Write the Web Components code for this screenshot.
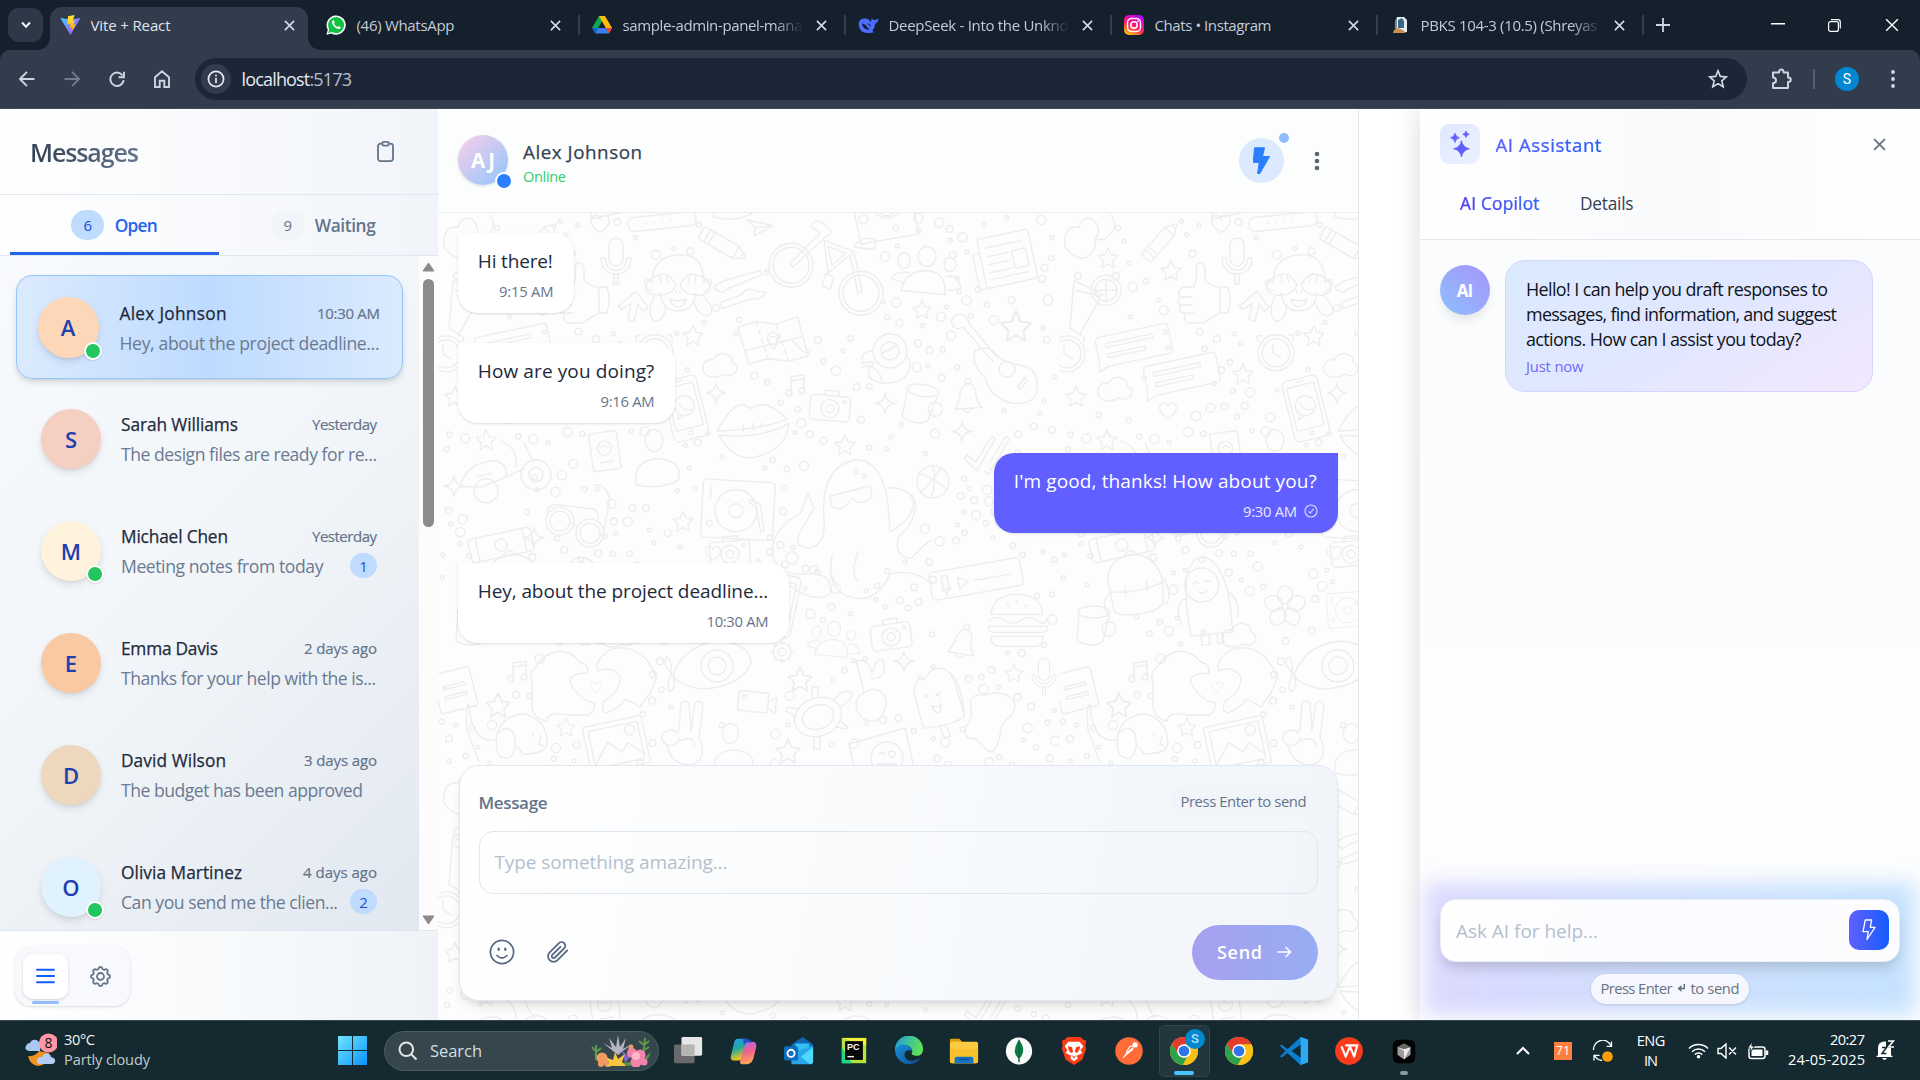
<!DOCTYPE html>
<html lang="en">
<head>
<meta charset="utf-8">
<title>Vite + React</title>
<style>
html,body{margin:0;padding:0;height:100%;overflow:hidden}
body{font-family:"Open Sans","Noto Sans",sans-serif;background:#fff;color:#1e293b}
</style>
</head>
<body>
<desktop-screen></desktop-screen>
<script>
const define = (name, html, setup) => {
  const tpl = document.createElement('template');
  tpl.innerHTML = '<style>*{box-sizing:border-box}:host{display:block;box-sizing:border-box}svg{display:block;flex:none}</style>';
  customElements.define(name, class extends HTMLElement {
    constructor() { super(); this.attachShadow({ mode: 'open' }); }
    connectedCallback() {
      if (this.ready) return;
      this.ready = true;
      const t = tpl.cloneNode(true);
      t.innerHTML += typeof html === 'function' ? html(k => this.getAttribute(k) || '', this) : html;
      this.shadowRoot.append(t.content.cloneNode(true));
      if (setup) setup(this);
    }
  });
};

/* ---------- icons ---------- */
const chrome = `<circle cx="16" cy="16" r="15" fill="#fbc116"/><path d="M16 8.9H29.2A15 15 0 0 1 16 31L22.3 19.5Z" fill="#fbc116"/><path d="M3 8.5A15 15 0 0 1 29.2 8.9H16L9.8 19.5Z" fill="#e33b2e"/><path d="M3 8.5 9.8 19.5A7 7 0 0 0 19.5 22L14.5 30.9A15 15 0 0 1 3 8.5Z" fill="#2ba24c"/><circle cx="16" cy="16" r="7.3" fill="#fff"/><circle cx="16" cy="16" r="5.7" fill="#2f74e8"/>`;
const I = {
  vite: `<svg width="21" height="20" viewBox="0 0 21 20"><defs><linearGradient id="a" x2="1" y2="1"><stop stop-color="#41d1ff"/><stop offset="1" stop-color="#bd34fe"/></linearGradient><linearGradient id="b" x2="0" y2="1"><stop stop-color="#ffea3a"/><stop offset="1" stop-color="#ffa800"/></linearGradient></defs><path d="M.3 3 10.4 20 20.6 3 10.5 4.6Z" fill="url(#a)"/><path d="M14.5 0 8 1.2 7.4 9.5 10.6 8.8 9.7 13 12 12.300 10.900 17 16 9.200 13 9.800 15 5.500 12.800 5.800Z" fill="url(#b)"/></svg>`,
  whatsapp: `<svg width="20" height="20" viewBox="0 0 20 20"><path d="M.4 19.700 1.800 14.800A9.600 9.600 0 1 1 5.400 18.400Z" fill="#fff"/><path d="M2.200 17.900 3.200 14.200A8 8 0 1 1 6 17Z" fill="#10c143"/><path d="M7.200 5.200C6 5.600 5.600 7.100 6.200 8.600 7.300 11.300 9.500 13.300 12.300 14 13.700 14.200 14.700 13.300 14.700 12L12.600 10.900 11.600 12C10 11.400 8.800 10.200 8 8.700L8.800 7.700 8 5.300Z" fill="#fff"/></svg>`,
  drive: `<svg width="20" height="18" viewBox="0 0 20 18"><path d="M7 0h6l-3.200 5.500-6 11L0 12Z" fill="#12a650"/><path d="M7 0h6l7 12h-6.200Z" fill="#fdbc0a"/><path d="M3.200 17.500 6.200 12H20l-3.300 5.500Z" fill="#3a7ef2"/><path d="M13.800 12H20l-3 5.500Z" fill="#ea4335"/><path d="M0 12H6.200L3.200 17.500Z" fill="#1d63d2"/></svg>`,
  deepseek: `<svg width="21" height="17" viewBox="0 0 21 17"><path d="M1 5C2 2 5 1 8 1.500 10 1.800 11.500 3 13 5 13.500 4 13 2.500 14 1.200 15 3 16 3.300 17.500 3 18.700 2.600 19.500 1.600 20.500 1.500 20.500 4 19 6 17 6.800 17 10 15.500 12.500 14.300 13.800L16 15.200C12 16.500 4.500 17 2 12 .8 9.700.4 7 1 5Z" fill="#4d6bfe"/><path d="M4 6.500C7 6.500 9 10 11.500 12.800 7.500 13.200 4.600 10.500 4 6.500ZM9.300 6.500C11.500 6 12.700 8.500 13 10.200Z" fill="#15202d"/></svg>`,
  instagram: `<svg width="20" height="20" viewBox="0 0 20 20"><defs><linearGradient id="i" x1=".2" y1="1" x2=".7" y2="0"><stop stop-color="#ffc800"/><stop offset=".4" stop-color="#ff2a5a"/><stop offset=".75" stop-color="#e500b8"/><stop offset="1" stop-color="#a50cf0"/></linearGradient></defs><rect width="20" height="20" rx="5" fill="url(#i)"/><g fill="none" stroke="#fff" stroke-width="1.500"><rect x="3.500" y="3.500" width="13" height="13" rx="4"/><circle cx="10" cy="10" r="3.200"/></g><circle cx="13.900" cy="6.200" r=".9" fill="#fff"/></svg>`,
  pbks: `<svg width="20" height="18" viewBox="0 0 20 18"><path d="M7 1h7l3 3v12H6Z" fill="#e9edf0"/><path d="M8 4l4-2 2 3v7H8Z" fill="#36688c"/><path d="M4 14l4-2 5 2 3 3H3Z" fill="#c98d55"/><path d="M7 1C4 5 5 9 5 13l2-1Z" fill="#7b8b92"/></svg>`
};
const close = (c, w = 12, sw = 2) => `<svg width="${w}" height="${w}" viewBox="0 0 12 12"><path d="M1 1 11 11M11 1 1 11" stroke="${c}" stroke-width="${sw}" fill="none"/></svg>`;

/* ---------- browser frame ---------- */
define('browser-tab', (a) => `<style>
:host{width:266px;height:43px;flex:none;display:flex;align-items:center}
.t{display:flex;align-items:center;width:258px;height:43px;padding:0 0 7px 10px;position:relative}
:host([active]) .t{background:#333c4d;border-radius:12px 12px 0 0}
:host([active]) .t:before,:host([active]) .t:after{content:"";position:absolute;bottom:0;width:12px;height:12px}
.t:before{left:-12px;background:radial-gradient(circle at 0 0,transparent 11.500px,#333c4d 12px)}
.t:after{right:-12px;background:radial-gradient(circle at 100% 0,transparent 11.500px,#333c4d 12px)}
:host(:not([active])) .t:before,:host(:not([active])) .t:after{display:none}
.i{width:20px;display:flex;justify-content:center}
.n{width:180px;margin-left:10.500px;overflow:hidden;font-size:15px;line-height:24px;color:#c3cad8}
:host([active]) .n{color:#dfe5ef}
:host([fade]) .n{-webkit-mask:linear-gradient(90deg,#000 84%,transparent);mask:linear-gradient(90deg,#000 84%,transparent)}
.x{width:18px;margin-left:9.500px;display:flex;justify-content:center}
.d{width:2px;height:20px;background:#343e4e;margin:0 0 7px 4px}
:host([active]) .d{display:none}</style>
<div class="t"><div class="i">${I[a('icon')]}</div><div class="n"><fit-text w="${a('w')}">${a('label')}</fit-text></div><div class="x">${close('#d3d9e4', 11, 1.800)}</div></div><div class="d"></div>`);

define('browser-chrome', `<style>
:host{height:109px;background:#15202d;border-bottom:1px solid #454a59}
.s{height:50px;display:flex;align-items:flex-end;padding-left:8px}
.m{width:35px;height:34px;border-radius:11px;background:#2e3848;display:grid;place-items:center;margin:0 7px 8px 0}
.p{width:20px;height:43px;display:flex;align-items:center;justify-content:center;margin-left:7px;padding-bottom:7px}
.w{display:flex;margin-left:auto;height:50px;align-items:center;width:171px}
.w div{width:57px;display:grid;place-items:center}
.b{height:58px;background:#333c4d;border-radius:10px 10px 0 0;display:flex;align-items:center;padding-left:4.500px}
.c{width:45px;display:grid;place-items:center}
.o{width:1552px;height:42px;border-radius:21px;background:#1c2636;margin-left:10.500px;display:flex;align-items:center;padding:0 19px 0 6px;font-size:18px;color:#e4e9f2}
.q{width:30px;height:30px;border-radius:50%;background:#333c4d;display:grid;place-items:center;margin-right:10.500px}
.st{margin-left:auto}
.e{width:66px;display:grid;place-items:center;padding-left:3px}.v{width:1.500px;height:20px;background:#566072}
.a{width:24px;height:24px;border-radius:50%;background:#0288d1;color:#fff;display:grid;place-items:center;font:14px/24px Roboto;margin-left:20.500px}
.k{margin-left:31.500px}.port{color:#b6bece}</style>
<div class="s"><div class="m"><svg width="10" height="8" viewBox="0 0 10 8"><path d="M1 1.500 5 5.800 9 1.500" fill="none" stroke="#eef2f8" stroke-width="2"/></svg></div>
<browser-tab active icon="vite" label="Vite + React" w="80"></browser-tab>
<browser-tab icon="whatsapp" label="(46) WhatsApp" w="98"></browser-tab>
<browser-tab fade icon="drive" label="sample-admin-panel-mana" w="180"></browser-tab>
<browser-tab fade icon="deepseek" label="DeepSeek - Into the Unkno" w="180"></browser-tab>
<browser-tab icon="instagram" label="Chats • Instagram" w="117"></browser-tab>
<browser-tab fade icon="pbks" label="PBKS 104-3 (10.5) (Shreyas" w="177"></browser-tab>
<div class="p"><svg width="14" height="14" viewBox="0 0 14 14"><path d="M7 0V14M0 7H14" stroke="#cfd6e2" stroke-width="1.800"/></svg></div>
<div class="w"><div><svg width="14" height="4"><rect width="14" height="1.500" fill="#fff"/></svg></div><div><svg width="13" height="13" viewBox="0 0 13 13" fill="none" stroke="#fff" stroke-width="1.200"><rect x=".6" y="2.600" width="9.800" height="9.800" rx="2"/><path d="M3 .7H9.800Q12.300.7 12.300 3.200V9.500"/></svg></div><div>${close('#fff', 14, 1.200)}</div></div></div>
<div class="b"><div class="c"><svg width="16" height="16" viewBox="0 0 16 16" fill="none" stroke="#cdd5e3" stroke-width="1.900"><path d="M8 .8.9 8 8 15.200M1 8H15.500"/></svg></div>
<div class="c"><svg width="16" height="16" viewBox="0 0 16 16" fill="none" stroke="#717b8d" stroke-width="1.900"><path d="M8 .8 15.100 8 8 15.200M15 8H.5"/></svg></div>
<div class="c"><svg width="16" height="16" viewBox="0 0 16 16" fill="none" stroke="#cdd5e3" stroke-width="1.900"><path d="M13.600 4.500A6.700 6.700 0 1 0 14.700 9.200M15 .8V6.200H9.600"/></svg></div>
<div class="c"><svg width="16" height="18" viewBox="0 0 16 18" fill="none" stroke="#cdd5e3" stroke-width="1.900"><path d="M1 7.200 8 1.300 15 7.200V17H10.300V10.800H5.700V17H1Z"/></svg></div>
<div class="o"><div class="q"><svg width="18" height="18" viewBox="0 0 18 18"><circle cx="9" cy="9" r="7.600" fill="none" stroke="#e4e9f2" stroke-width="1.700"/><path d="M9 8V13M9 4.800V6.600" stroke="#e4e9f2" stroke-width="1.700"/></svg></div>
<fit-text w="110.500">localhost<span class="port">:5173</span></fit-text>
<svg class="st" width="20" height="20" viewBox="0 0 20 20"><path d="M10 1.800 12.300 7.400 18.400 7.900 13.800 11.800 15.200 17.800 10 14.600 4.800 17.800 6.200 11.800 1.600 7.900 7.700 7.400Z" fill="none" stroke="#d5dbe7" stroke-width="1.600"/></svg></div>
<div class="e"><svg width="22" height="22" viewBox="0 0 22 22" fill="none" stroke="#cdd5e3" stroke-width="2"><path d="M2 4.500H8C8 .6 12.600.6 12.600 4.500H17V9.500C20.700 9.500 20.700 14 17 14V20H2V15.200C6 15.200 6 9.500 2 9.500Z" stroke-linejoin="round"/></svg></div><div class="v"></div><div class="a">S</div>
<svg class="k" width="4" height="18"><g fill="#d5dbe7"><circle cx="2" cy="2" r="1.900"/><circle cx="2" cy="9" r="1.900"/><circle cx="2" cy="16" r="1.900"/></g></svg></div>`);

/* ---------- sidebar ---------- */
define('chat-row', a => `<style>
:host{height:102px;display:flex;align-items:center;padding:0 22px 0 21px;flex:none}
:host([selected]){height:104px;margin:-1px -4px;padding:0 22px 0 20.500px;border:1px solid #93c5fd;border-radius:16px;background:linear-gradient(90deg,#dbeafe,#bedbff 50%,#dbeafe);box-shadow:0 4px 7px -1px #00000022,0 2px 4px -2px #0000001a}
.av{width:60px;height:60px;border-radius:50%;background:${a('color')};color:#1e40af;font-weight:600;font-size:22px;display:grid;place-items:center;position:relative;box-shadow:0 4px 8px -1px #0000001f,0 2px 4px -2px #0000001a;flex:none}
:host([selected]) .av{width:61px;height:61px}
.dot{position:absolute;right:-3px;bottom:-2px;width:18px;height:18px;border-radius:50%;background:#22c55e;border:2px solid #fff;box-shadow:0 1px 2px #0002}
.b{flex:1;margin-left:20px;min-width:0}:host([selected]) .b{margin:2px 0 0 21px}
.l{display:flex;justify-content:space-between;align-items:center;height:30px}
.n{font-size:17.300px;font-weight:500;color:#1e293b;-webkit-text-stroke:.25px #1e293b}.t{font-size:15px;color:#64748b;-webkit-text-stroke:.2px #64748b}.m{font-size:17.600px;color:#6b7a90}
.u{height:25px;min-width:27px;border-radius:13px;background:#bfdbfe;color:#1d4ed8;font-size:15px;font-weight:500;display:grid;place-items:center;margin-top:-1px}</style>
<div class="av">${a('name')[0]}${a('online') ? '<i class="dot"></i>' : ''}</div><div class="b"><div class="l"><fit-text class="n" w="${a('nw')}">${a('name')}</fit-text><fit-text class="t" w="${a('tw')}">${a('time')}</fit-text></div>
<div class="l"><fit-text class="m" w="${a('mw')}">${a('msg')}</fit-text>${a('unread') ? `<span class="u">${a('unread')}</span>` : ''}</div></div>`);

define('message-sidebar', `<style>
:host{width:438px;height:911px;display:flex;flex-direction:column;flex:none}
.h{height:86px;border-bottom:1px solid #dfe7f0;display:flex;align-items:center;justify-content:space-between;padding:0 44px 0 30px;background:linear-gradient(90deg,#fff,#f1f4f9)}
h1{margin:0;font-size:25px;line-height:36px;font-weight:600;background:linear-gradient(90deg,#334155,#64748b);-webkit-background-clip:text;background-clip:text;color:transparent}
.tabs{height:61px;border-bottom:1px solid #dfe7f0;display:flex;padding:0 10px;background:linear-gradient(90deg,#fff,#f1f4f9)}
.tab{width:209px;height:60px;display:flex;align-items:center;justify-content:center;font-size:17.300px;font-weight:600;color:#64748b;padding-top:2px;border-bottom:3px solid transparent;gap:10.500px}
.tab fit-text{padding-top:1px}
.tab.on{color:#2563eb;border-color:#2563eb}
.c{width:33px;height:30px;border-radius:15px;background:#f1f4f9;display:grid;place-items:center;font-size:15px;font-weight:500}.on .c{background:#bfdbfe;color:#1d4ed8}
.mid{height:674px;display:flex;background:#fcfcfc}
.list{width:419px;height:674px;overflow:hidden;background:linear-gradient(135deg,#f8fafc,#f1f5f9 50%,#e2e8f0);padding:20px;display:flex;flex-direction:column;gap:10px}
.sb{width:19px;display:flex;flex-direction:column;align-items:center;padding-top:6px}
.th{width:11px;height:248px;border-radius:6px;background:#8b8b8b;margin:7px 0 388px}
.f{height:90px;flex:none;border-top:1px solid #dfe6ef;background:linear-gradient(90deg,#fff,#f8fafc 50%,#eff3f7);padding:15px}
.fb{width:115px;height:60px;border-radius:16px;background:#f7f9fc;box-shadow:0 1px 3px #00000024;display:flex;align-items:center;padding:0 8px}
.fa{width:45px;height:45px;flex:none;border-radius:10px;background:#fff;box-shadow:0 1px 3px #0000002a;display:grid;place-items:center;position:relative}
.fa:after{content:"";position:absolute;left:9px;bottom:-5px;width:27px;height:3px;border-radius:2px;background:#92bcff}
.fg{width:65px;flex:none;display:grid;place-items:center}</style>
<div class="h"><h1><fit-text w="109">Messages</fit-text></h1><svg width="17" height="21" viewBox="0 0 17 21" fill="none" stroke="#64748b" stroke-width="1.800"><rect x="1" y="2.600" width="15" height="17.500" rx="2.500"/><rect x="5.300" y=".9" width="6.400" height="3.800" rx="1.600" fill="#f3f6fa"/></svg></div>
<div class="tabs"><div class="tab on"><span class="c">6</span><fit-text w="43">Open</fit-text></div><div class="tab"><span class="c">9</span><fit-text w="61">Waiting</fit-text></div></div>
<div class="mid"><div class="list">
<chat-row selected online="1" color="#fed7b8" name="Alex Johnson" nw="107" time="10:30 AM" tw="63" msg="Hey, about the project deadline..." mw="260"></chat-row>
<chat-row color="#f5cfc2" name="Sarah Williams" nw="117" time="Yesterday" tw="65" msg="The design files are ready for re..." mw="256"></chat-row>
<chat-row online="1" color="#fff3dd" name="Michael Chen" nw="107" time="Yesterday" tw="65" msg="Meeting notes from today" mw="202.500" unread="1"></chat-row>
<chat-row color="#f9c9a3" name="Emma Davis" nw="97" time="2 days ago" tw="73" msg="Thanks for your help with the is..." mw="255"></chat-row>
<chat-row color="#edd7bd" name="David Wilson" nw="105" time="3 days ago" tw="73" msg="The budget has been approved" mw="242"></chat-row>
<chat-row online="1" color="#e0f2fe" name="Olivia Martinez" nw="121" time="4 days ago" tw="74" msg="Can you send me the clien..." mw="217" unread="2"></chat-row>
</div><div class="sb"><svg width="13" height="10"><path d="M6.500 1 12 9H1Z" fill="#8b8b8b" stroke="#8b8b8b" stroke-linejoin="round"/></svg><div class="th"></div><svg width="13" height="10"><path d="M6.500 9 12 1H1Z" fill="#8b8b8b" stroke="#8b8b8b" stroke-linejoin="round"/></svg></div></div>
<div class="f"><div class="fb"><div class="fa"><svg width="19" height="16" viewBox="0 0 19 16"><path d="M1 1.700H18M1 8H18M1 14.200H18" stroke="#155dfc" stroke-width="1.900" stroke-linecap="round"/></svg></div><div class="fg"><svg width="21" height="21" viewBox="-10.500 -10.500 21 21" fill="none" stroke="#64748b" stroke-width="1.800"><path id="g"/><circle r="3.500"/></svg></div></div></div>`, el => {
  let d = '';
  for (let i = 0; i < 96; i++) { const t = i / 96 * Math.PI * 2, k = Math.cos(8 * t), r = 8.500 + .95 * Math.tanh(2.200 * k); d += (i ? 'L' : 'M') + (r * Math.sin(t)).toFixed(2) + ' ' + (r * -Math.cos(t)).toFixed(2); }
  el.shadowRoot.getElementById('g').setAttribute('d', d + 'Z');
});

/* ---------- doodle wallpaper ---------- */
const at = (x, y, d, r = 0, s = 1) => `<g transform="translate(${x} ${y.toFixed(1)}) rotate(${r}) scale(${s})">${d}</g>`;
const P = d => `<path d="${d}"/>`, C = (x, y, r) => `<circle cx="${x}" cy="${y}" r="${r}"/>`, R = (x, y, w, h, r = 2) => `<rect x="${x}" y="${y}" width="${w}" height="${h}" rx="${r}"/>`;
const D = {
  star: P('M0-10 3-3 10-2 5 3 6 10 0 6-6 10-5 3-10-2-3-3Z'),
  spark: P('M0-10Q1-1 10 0 1 1 0 10-1 1-10 0-1-1 0-10Z'),
  heart: P('M0 9C-15-1-9-11-2-8Q0-7 0-4 0-7 2-8C9-11 15-1 0 9Z'),
  mic: R(-7, -26, 14, 28, 7) + P('M-15-6Q-14 10 0 10T15-6L11-6Q10 6 0 6T-11-6ZM-2 10V20H2V10'),
  pencil: R(-24, -7, 40, 14, 3) + P('M16-7 28 0 16 7M-17-7V7M-12-7V7M23-3V3'),
  plane: P('M-13-8 13-2-6 8-5 0ZM-5 0 13-2'),
  bike: C(-35, -8, 22) + C(-35, -8, 18) + C(35, 20, 22) + C(35, 20, 18) + P('M-36-10-6-40-14-46Q-14-54-6-52L4-44Q6-38 0-37L-33-6ZM-2-33 2 0 28-22ZM2-27 6-8 20-20ZM28-22 36 18 32 20 24-18M28-28Q40-38 48-34 52-24 44-24L30-26ZM0 0-4 12 4 16 8 4Z'),
  monkey: P('M-26-6Q-26-32 0-34T26-6Q36-14 32-2 28 2 26 4M-26-6Q-36-14-32-2-30 2-26 2M-18 4Q-16 22 0 22T18 4M-8 10Q0 14 8 10 6 18 0 18T-8 10M-2 2V4M2 2V4M-2-4Q-10-18-18-14-34-10-32 2-26 8-16 6-6 6-2-4ZM2-4Q10-18 18-14 34-10 32 2 26 8 16 6 6 6 2-4ZM-24 8Q-32 24-24 32-14 34-12 16M24 6Q38 20 32 26 22 30 16 14M-12-14-10-6M-18-14-17-6M12-14 10-6M18-14 17-6'),
  thumb: P('M-2-32Q4-34 5-26V-14Q16-8 20-6V18Q12 22 4 28H-12Q-18 24-14 18-22 18-20 10-24 6-20 2-24-6-16-8H-6Q-2-18-4-28ZM20-8H28Q32 4 28 18H20M-20 2H-8M-20 10H-8M-14 18H-6'),
  arrow: P('M4-16 16 0 11 4 6-3 2 14-4 12-1-4-10 2-14-1Z'),
  map: P('M-34-16-16-20 4-16 26-22 34 18 14 22-6 18-26 22ZM-28 8 10 2 30-2M18 0 30 14') + `<path stroke-dasharray="5 4" d="M-16-20-6 18M4-16 14 22"/>` + C(0, 0, 4) + P('M-6-2Q-4-8 0-8 4-8 6-2 4 4 0 9-4 4-6-2Z'),
  cloud: P('M-12 12Q-20 8-16-1-12-6-7-4-2-13 6-10 13-8 12-2 20 2 15 9 10 13 4 10-3 15-12 12Z'),
  duck: C(4, -8, 17) + C(4, -8, 9) + P('M-4-6 12-14M-13-8Q-26-8-24 4-12 2-12 4-26 18-6 24 22 26 24 6 24 0 20-4M-24 8Q-8 4-4 22'),
  phone: R(-18, -31, 36, 62, 5) + R(-14, -24, 28, 44, 1) + C(0, -3, 10) + C(0, 25, 2) + P('M-4-28H4M-5-7Q-2 3 6 2M-8 5-10 9-4 7'),
  lips: P('M-36 4Q-20-26-8-22-2-16 4-22 16-26 34-8 10 2-36 4ZM-34 8Q-20 34 2 30 34 22 36-4 10 12-34 8ZM-10-2V4M0-4V2M8-4V0'),
  camera: R(-20, -12, 40, 25, 4) + C(0, 1, 9) + C(0, 1, 4) + P('M-6-12V-17H8V-12') + C(14, -7, 1.500),
  note: P('M-5 8V-8L8-10V5M-5-4 8-6') + C(-7, 8, 3) + C(6, 6, 3),
  clock: C(0, 0, 18) + C(0, 0, 14) + P('M-3-9V0L5 5M-18-12Q-22-18-14-17M12-18Q18-20 17-12'),
  scooter: P('M-30 10Q-24-14 4-16 18-14 16 0L-8 10-30 10ZM16 0 34-8M34-34Q40-20 44-14M10-36Q28-30 26-10') + C(-4, 14, 12) + C(46, -2, 15) + C(46, -2, 7) + P('M-12 0 2-4'),
  passport: R(-15, -20, 28, 38, 3) + C(-1, -4, 7) + P('M-7 10H6M-4-5Q-1-8 3-4'),
  person: `<ellipse cx="-4" cy="-26" rx="9" ry="11"/>` + P('M-22 18Q-26-6 0-8 26-6 20 14 0 24-22 18Z'),
  turn: R(-36, -28, 72, 58, 4) + C(-2, 2, 21) + C(-2, 2, 7) + C(-28, 16, 3) + P('M10-8 18-2 24 22 27 20 22-5 12-10ZM-28-22V-10'),
  glasses: C(-20, 2, 14) + C(10, 14, 14) + C(-20, 2, 10) + C(10, 14, 10) + P('M-8 4-2 8M-34-6Q-32-16-20-14L14-10Q20-4 18 0M24 10 30-20Q26-36 14-34'),
  octo: P('M-30 6Q-34-46 0-54 28-56 34-10L36 18Q66 0 58-20M34-26Q54-28 62-10 60 10 44 24 40 44 58 44 70 30 78 26M-30 6Q-28 30-44 34-62 34-54 18L-40-6-46-20-54 0Q-88 18-80 46-70 62-48 60M-48 60Q-20 58-24 80-40 90-64 72M-24 56Q-20 88 14 84 30 76 36 60M-22 42Q-26 64-16 70M4 38Q-4 60 4 66M36 60Q60 54 78 70') + P('M-24-18 16-28 18-18Q8-6-2-16-12 0-22-8Z') + C(-62, 44, 6) + C(-40, 56, 4) + C(2, -42, 2) + C(10, -38, 2),
  lantern: R(-32, -12, 64, 24, 4) + P('M-24-12V12M24-12V12') + C(0, 0, 6),
  people: `<ellipse cx="0" cy="-24" rx="9" ry="10"/><ellipse cx="-23" cy="-20" rx="6" ry="8"/><ellipse cx="23" cy="-16" rx="6" ry="7"/>` + P('M-26 10Q-22-10 0-10 20-8 18 14ZM-24 2-36-2Q-32-10-18-8M19-4Q32-6 34 8L20 10'),
  news: R(-26, -24, 52, 50, 3) + P('M-20-14H18M-20-5H2M-20 3H2M-20 11H2M-20 18H18M-26-10H-33V26H-22') + R(6, -6, 14, 18, 1),
  guitar: P('M-6-8-34-42M-10-4-40-38M-34-42Q-38-54-48-50-56-42-46-36L-40-38M-6-10Q-16-22-28-14-32 0-18 12-12 34 10 38 34 40 34 22 36 4 18 0 0-2-6-10Z') + C(4, 4, 8) + P('M14 22 22 12 24 16 17 24Z'),
  mug: P('M-16-12-18 16Q0 24 8 16L14-8') + `<ellipse cx="-1" cy="-13" rx="16" ry="6"/>` + C(14, 4, 7),
  bell: P('M-13 12Q-8 4-8-4-6-13 0-14 8-13 8-2 9 6 14 10ZM-4 13Q0 18 4 12') + C(0, -16, 3),
  ball: C(0, 0, 16) + P('M-14-8Q2-4 14 8M-12 10Q0 0 8-14M0-16Q4 0-2 16'),
  checks: P('M-18 6-4 16 10-18 6-20-6 8-16 2ZM4 16 8 18 24-20 20-22 8 6'),
  voice: R(-46, -14, 92, 28, 4) + P('M-18-5V7L-8 1ZM-2 1H34M-36 4Q-31 12-26 4M-31 8V12') + R(-34, -9, 6, 14, 3),
  burger: P('M-26-6Q-24-26 0-26T26-6ZM-28 0Q-20-6-12 0T4 0 20 0 30-2M-28 6H30Q32 12 26 12H-24Q-30 10-28 6ZM-26 16H26Q26 26 18 26H-16Q-26 26-26 16Z') + P('M-10-16-8-14M0-20V-17M8-14 10-16'),
  drink: P('M-18-24 10-10-12 30-22 24ZM-16-14 8-8') + C(14, -14, 15) + C(14, -14, 11) + P('M14-24V-4M4-14H24'),
  chat: P('M-36-16H36Q40-16 40-12V12Q40 16 36 16H-30L-40 20-38 8V-12ZM-28-8H22V-4H-28ZM-28 3H12V7H-28Z'),
  blob: P('M-22 8Q-24-14-8-12-4-24 6-20 16-10 8 0 18 2 22-4 32-14 24-24M-22 8Q-12 22 0 18 10 12 8 0'),
  pack: P('M-24 22-26-6Q-26-30 0-32 26-30 28 0L26 20Q20 28 0 28T-24 22ZM-26 2Q0 8 28 0M-30 26Q-38 10-24 2M28 22Q36 16 30-4M-10-2V8M12-4V6M-6-32Q0-40 6-32'),
  hood: P('M-18 38Q-24-36 0-40 22-36 24 10V38ZM-20 0Q-32 4-26 26M22-4Q36 8 30 24') + C(-2, -12, 17) + P('M-10-14Q-8-18-5-14M2-14Q4-18 7-14M-6-6Q-2-1 3-6M-8 38V48H0V38M8 38V48H14V38'),
  flower: [0, 72, 144, 216, 288].map(r => `<ellipse cx="0" cy="-12" rx="7.500" ry="9" transform="rotate(${r})"/>`).join('') + C(0, 0, 3),
  hands: P('M-62-4Q-66-14-58-20-50-34-34-36-20-34-16-26-4-22-6-14-26-14-24-4-16 12 0 16 2 24-6 28H-28Q-46 24-48 34-60 32-62 20ZM62-8Q60-20 48-32 30-44 14-36 0-26 4-16 18-22 26-10 26 6 10 14 6 24 12 26 24 22 32 12L46 20 56 6Z') + `<g transform="translate(2 0) scale(.6)">${P('M0 9C-15-1-9-11-2-8Q0-7 0-4 0-7 2-8C9-11 15-1 0 9Z')}</g>`,
  eye: P('M-42 8Q-30-24 6-26 36-22 36-4 28 18-10 22-36 20-42 8ZM-42 8Q-54-4-48-10-42-6-44 8-50 24-44 24-38 18-42 8') + C(2, -1, 16) + C(2, -1, 9),
  gear: C(0, 0, 9) + C(0, 0, 4) + P('M0-11V-8M0 8V11M-11 0H-8M8 0H11M-8-8-6-6M6 6 8 8M8-8 6-6M-8 8-6 6'),
  plant: P('M-4 0Q-8-20-12-32 0-36 4-20 8-34 14-34 22-16 4-14M-4 0Q10-10 18 6 18 24 6 28-10 28-12 12-12 2-4 0Z'),
  pop: P('M-20-12Q-16-30-8-24-2-36 10-34 22-30 24-6L28 16Q18 24-14 24ZM2 24 6 36Q10 36 12 34L8 23M18-28Q28-20 28 16M-10-10-6-8-10-6M6-10 2-8 6-6M-4 2Q2 6 6 2L4 10H0Z'),
  cam: R(-18, -11, 30, 20, 3) + P('M12-2 20-7V9L12 4') + C(-12, -5, 2),
  turtle: `<ellipse rx="24" ry="19" transform="rotate(-20)"/><ellipse rx="16" ry="12" transform="rotate(-20)"/>` + P('M16-16Q24-30 34-24 34-16 22-10M-6-20V-30H0V-20M-22 0-32-6-30-10-20-8M-4 20V32H2V19M22 4 30 10 28 12 18 10'),
  dog: P('M-26-6Q-20-26 2-26 24-20 24 4 22 14 0 14L-6 6M-26-6Q-30 20-14 18-4 10-10-8-16-16-26-6ZM-26 0Q-52 4-54-36-58-34-56-10-48 12-44 22M10-6V-4M18-4 16 4 20 6'),
  pic: R(-30, -22, 60, 48, 2) + R(-25, -17, 50, 38, 1) + P('M-25 18-8-2 4 10 12 2 25 16') + C(16, -10, 5),
  peace: P('M-2-34Q2-38 6-34L8-6 12-34Q18-38 20-32L16 0Q26 22 8 28-12 28-16 8-24 4-20-4-10-10-6-4L-4-8ZM-16 8Q-6 10-4 0M-4 4Q10-2 12 8'),
  sheet: P('M-36-10 20-26 34 36-24 46Z') + C(2, 4, 16) + P('M-6 0Q-3-3 0 0M-8 10H12Q8 18 2 18T-8 10') + C(7, 0, 3),
  goo: P('M-22-20Q-20-30-8-28 4-32 14-28 28-22 20-8 8 0 8 12 4 32-4 28L-16 16Q-30 16-26 4-18-6-22-20Z'),
  memo: R(-20, -20, 38, 40, 3) + P('M-12-6H10V-3H-12ZM-12 4H10V7H-12Z'),
  wrench: P('M-24 4-14-2 22-12 24-8-10 6-16 10-24 6ZM-18 20 4 12Q8 4 16 8L28 10Q22 18 14 16L-16 26Z'),
  can: R(-34, -7, 68, 14, 6) + P('M-16 0H-15M-8 0H-7M0 0H1M8 0H9')
};
const placed = [['heart',162,11],['can',224,9,-6],['mic',178,50],['pencil',284,31,30],['plane',322,15],['bike',388,59],['monkey',240,74],['thumb',141,80],['arrow',194,92],['wrench',300,68],['map',335,124,-4],['cloud',282,147],['duck',448,142],['phone',247,190,-14],['lips',315,208],['camera',392,189,5],['note',358,167],['clock',217,136],['scooter',52,256],['passport',168,232,-8],['person',220,246],['turn',300,287,3],['glasses',142,297],['octo',416,292],['lantern',63,322,-12],['people',489,66],['news',569,44,-12],['guitar',565,148],['mug',484,185,8],['bell',530,179],['ball',495,261],['checks',545,235,8],['voice',538,355,-10],['burger',579,395],['drink',33,89],['chat',74,129,-12,.95],['chat',122,157,-12,.95],['cloud',56,170],['pack',76,362,-8],['hood',146,372,-6],['flower',226,382],['pencil',101,29,-48,.9],['blob',28,26],['clock',8,137],['hands',156,478],['eye',277,458],['people',396,438,0,.75],['camera',453,427,-8],['bell',525,434,14],['plant',430,484],['pop',497,494,-6],['cam',318,494,6],['turtle',380,508],['dog',85,531],['pic',178,534,-12],['peace',245,528],['person',296,548,0,.9],['sheet',447,545],['goo',554,514],['memo',18,481,-14],['gear',344,443],['camera',292,330,-4],['phone',340,380,12],['mug',36,416],['note',80,462],['cloud',180,425],['spark',96,315],['turn',290,400,-4,.6],['heart',275,330,0,.8],['heart',109,192,0,.9],['mic',606,470,0,.8],['cam',600,300],['spark',16,265],['spark',278,175],['spark',447,185],['spark',524,212],['star',48,220],['star',17,178],['star',112,56],['star',49,44],['star',184,156],['star',255,119],['star',245,299],['star',578,110,0,1.500],['star',484,94,0,.9],['star',407,225],['star',60,496,0,1.200],['star',128,518,0,.9],['star',350,542,0,1.200],['star',362,470,0,1.200],['star',576,464,0,.9],['spark',466,452]]
  .map(([k, x, y, r, s]) => [k, x, y < 400 ? (y + 101) * 1.033 - 105 : y - 4, r, s]);
let seed = 7; const rnd = () => (seed = (seed * 16807) % 2147483647) / 2147483647;
let wall = placed.map(([k, x, y, r, s]) => at(x, y, D[k], r, s)).join('');
wall += placed.filter(p => p[2] > 525).map(([k, x, y, r, s]) => at(x, y - 556, D[k], r, s)).join('');
const big = { bike: 56, octo: 62, monkey: 34, guitar: 40, hands: 52, map: 34, lips: 34, turn: 38, news: 34, voice: 38, eye: 36, scooter: 38 };
const dots = [];
for (let i = 0; i < 2600 && dots.length < 330; i++) {
  const x = rnd() * 613 + 4, y = rnd() * 548 + 4, r = [2, 2.600, 3.400, 4.600][Math.floor(rnd() * 4)];
  if (placed.some(([k, px, py, , s]) => Math.hypot(px - x, py - y) < (k === 'star' || k === 'spark' || k === 'heart' || k === 'note' ? 14 : (big[k] || 27) * (s || 1)) + r)) continue;
  if (dots.some(d => Math.hypot(d[0] - x, d[1] - y) < 11)) continue;
  dots.push([x, y]); wall += C(x.toFixed(1), y.toFixed(1), r);
}
define('doodle-wall', `<style>:host{background:#fdfdfd;overflow:hidden}</style><svg width="920" height="811"><defs><pattern id="p" width="621" height="556" patternUnits="userSpaceOnUse"><g fill="none" stroke="#ededed" stroke-width="1.400" stroke-linecap="round" stroke-linejoin="round">${wall}</g></pattern></defs><rect width="920" height="811" fill="url(#p)"/></svg>`);

/* ---------- conversation ---------- */
define('message-bubble', a => `<style>
:host{align-self:flex-start;width:${a('bw')}px;height:80px;background:#fff;border-radius:0 20px 20px 20px;padding:18.500px 20.500px 0 19.800px;box-shadow:0 1px 3px #0000001c,0 1px 2px -1px #0000001a;color:#1e293b;flex:none}
:host([sent]){align-self:flex-end;border-radius:20px 0 20px 20px;background:#615fff;color:#fff}
.x{font-size:19px;height:19px;line-height:19px;display:block}
.t{display:flex;justify-content:flex-end;align-items:center;gap:6.500px;font-size:14.800px;line-height:20px;color:#64748b;margin-top:10px}
:host([sent]) .t{color:#e6e8ff}</style>
<fit-text class="x" w="${a('w')}">${a('text')}</fit-text><div class="t"><fit-text w="${a('tw')}">${a('time')}</fit-text>${a('tick') ? `<svg width="14" height="14" viewBox="0 0 14 14" fill="none" stroke="#d9dcff" stroke-width="1.100"><circle cx="7" cy="7" r="6"/><path d="M4.500 7.300 6.300 9 9.700 4.900"/></svg>` : ''}</div>`);

define('chat-composer', `<style>
:host{width:879px;height:236px;border:1px solid #dfe7f2;border-radius:20px;background:linear-gradient(100deg,#fff,#f8fafc 50%,#f1f5f9);box-shadow:0 8px 12px -3px #0000001c,0 4px 6px -4px #0000001a;padding:20px 19px 0;display:flex;flex-direction:column}
.a{display:flex;justify-content:space-between;height:30px;align-items:center;font-size:17px;font-weight:600;color:#64748b}
.l{margin-top:3px}
.h{height:30px;width:147px;border-radius:12px;background:#f1f4f9;font-size:14.800px;font-weight:400;display:flex;align-items:center;padding-left:10px}
.i{height:63px;border:1px solid #dfe6f0;border-radius:14px;margin-top:15px;padding-left:15px;display:flex;align-items:center;font-size:19px;color:#b4bfce}
.c{display:flex;align-items:center;margin-top:31px;height:55px;padding-left:10px}
.c>svg:nth-child(2){margin-left:30px}
.s{margin-left:auto;width:126px;height:55px;border-radius:28px;background:linear-gradient(90deg,#a5a0f0,#98adf3);color:#fff;display:flex;align-items:center;padding-left:25.500px;font-size:18px;font-weight:600;gap:14.500px}</style>
<div class="a"><fit-text class="l" w="69">Message</fit-text><span class="h"><fit-text w="126">Press Enter to send</fit-text></span></div>
<div class="i"><fit-text w="233">Type something amazing...</fit-text></div>
<div class="c"><svg width="26" height="26" viewBox="0 0 26 26" fill="none" stroke="#566883" stroke-width="1.700" stroke-linecap="round"><circle cx="13" cy="13" r="11.600"/><path d="M8 16.500Q13 21.500 18 16.500"/><g fill="#566883" stroke="none"><ellipse cx="9.700" cy="10.200" rx="1.200" ry="1.800"/><ellipse cx="16.300" cy="10.200" rx="1.200" ry="1.800"/></g></svg>
<svg width="25" height="25" viewBox="0 0 24 24" fill="none" stroke="#566883" stroke-width="1.700" stroke-linecap="round" stroke-linejoin="round"><path d="M21.400 10 12 19.400A5.300 5.300 0 0 1 4.500 11.900L13.400 3A3.500 3.500 0 0 1 18.400 8L9.600 16.800A1.800 1.800 0 0 1 7 14.200L14.800 6.500"/></svg>
<div class="s"><fit-text w="45">Send</fit-text><svg width="15" height="14" viewBox="0 0 15 14" fill="none" stroke="#fff" stroke-width="1.500"><path d="M.5 7H13.500M8.500 2 13.500 7 8.500 12"/></svg></div></div>`);

define('chat-panel', `<style>
:host{width:921px;height:911px;display:flex;flex-direction:column;border-right:1px solid #e5e7eb;flex:none}
.h{height:104px;flex:none;border-bottom:1px solid #eceef0;background:#fcfdfd;display:flex;padding:26px 38.500px 0 20px}
.av{width:50px;height:50px;border-radius:50%;background:linear-gradient(135deg,#fccee8,#8ec5ff);color:#fff;font-weight:700;font-size:20.500px;display:grid;place-items:center;position:relative;box-shadow:0 1px 3px #0002}
.av i{position:absolute;left:37px;top:37px;width:18px;height:18px;border:2px solid #fff;border-radius:50%;background:#2b7fff}
.n{margin-left:15px;padding-top:4.500px}
.nm{font-size:18.800px;line-height:24px;font-weight:500;color:#364153;-webkit-text-stroke:.25px #364153;display:block}.on{font-size:14.600px;line-height:24px;color:#2fcf6b;display:block}
.r{margin-left:auto;display:flex;align-items:flex-start}
.z{width:45px;height:45px;border-radius:50%;background:#dbeafe;margin-top:3px;display:grid;place-items:center;position:relative}
.z i{position:absolute;right:-5px;top:-5px;width:10px;height:10px;border-radius:50%;background:#90bcff}
.k{margin:15.500px 0 0 30px}
.g{flex:none;height:807px;display:grid;grid-template:807px/920px;overflow:hidden}
.g>*{grid-area:1/1}
.m{display:flex;flex-direction:column;padding:20px 20px 0;gap:30px;min-height:0;z-index:1}
chat-composer{margin:auto 0 19.500px .5px;flex:none}</style>
<div class="h"><div class="av"><fit-text w="24">AJ</fit-text><i></i></div><div class="n"><fit-text class="nm" w="119">Alex Johnson</fit-text><fit-text class="on" w="43">Online</fit-text></div>
<div class="r"><div class="z"><svg width="17" height="27" viewBox="0 0 17 27"><path d="M1.500.8H11.500L9.500 9.500H16.600L6.800 26.500H4.600L6.200 15.500H.3Z" fill="#2b7fff" stroke="#2b7fff" stroke-linejoin="round"/></svg><i></i></div>
<svg class="k" width="6" height="20"><g fill="#5b6474"><circle cx="3" cy="3" r="2.300"/><circle cx="3" cy="10" r="2.300"/><circle cx="3" cy="17" r="2.300"/></g></svg></div></div>
<div class="g"><doodle-wall></doodle-wall><div class="m">
<message-bubble bw="116" text="Hi there!" w="75" time="9:15 AM" tw="54.500"></message-bubble>
<message-bubble bw="217" text="How are you doing?" w="176.500" time="9:16 AM" tw="54"></message-bubble>
<message-bubble sent tick="1" bw="344" text="I'm good, thanks! How about you?" w="303" time="9:30 AM" tw="54"></message-bubble>
<message-bubble bw="331" text="Hey, about the project deadline..." w="290.500" time="10:30 AM" tw="62"></message-bubble>
<chat-composer></chat-composer></div></div>`);

/* ---------- AI assistant ---------- */
define('ai-panel', `<style>
:host{position:relative;z-index:0;width:500px;height:911px;margin-left:auto;display:flex;flex-direction:column;background:linear-gradient(180deg,#fbfcfe,#fcfdfd 60%,#fdfdff);box-shadow:0 0 25px #00000026;clip-path:inset(0 0 0 -40px);flex:none}
.h{height:131px;border-bottom:1px solid #e5e7eb;background:linear-gradient(90deg,#fff,#f9fafc 50%,#fff);padding:15px 34px 0 20px;flex:none}
.t{display:flex;align-items:center;height:40px}
.ic{width:40px;height:40px;border-radius:9px;background:linear-gradient(135deg,#e0e7ff,#eaf3ff);display:grid;place-items:center;margin-right:15.500px}
.g{background:linear-gradient(90deg,#615fff,#155dfc);-webkit-background-clip:text;background-clip:text;color:transparent}
.t .g{font-size:18.600px;font-weight:500;-webkit-text-stroke:.2px #4b5fff;margin-top:1px}
.x{margin-left:auto}
.b{display:flex;gap:40.500px;margin:26.500px 0 0 20px;font-size:17.300px;font-weight:500;line-height:26px;color:#364153}
.b .g{background-image:linear-gradient(90deg,#4f39f6,#2b67ff);-webkit-text-stroke:.2px #4550f8}
.c{padding:20px;display:flex;align-items:flex-start;flex:1}
.av{width:50px;height:50px;margin-top:5px;border-radius:50%;background:linear-gradient(45deg,#8ec0ff,#a594f9);color:#fff;font-weight:700;font-size:17px;display:grid;place-items:center;padding-top:1px;box-shadow:0 8px 12px -3px #0000001c}
.m{width:368px;height:132px;margin-left:15px;border:1px solid #d6d4ff;border-radius:20px;background:linear-gradient(150deg,#dbeafe,#e0e7ff 50%,#f3e8ff);padding:16px 20px;font-size:17.900px;line-height:25px;color:#10131a;display:flex;flex-direction:column}
.m .j{font-size:14.800px;color:#7069fb;line-height:28px}
.f{height:142px;flex:none;padding:21px 20px 0;display:flex;flex-direction:column;align-items:center;position:relative}
.gl{position:absolute;inset:5px 5px 5px 5px;background:linear-gradient(90deg,#dcd9ff,#d0dffe 45%,#c5e2fe);filter:blur(10px);z-index:-1}
.i{width:460px;height:63px;border:1px solid #e8edf7;border-radius:16px;background:linear-gradient(110deg,#fff,#fafbff 50%,#fdfdff);box-shadow:0 8px 14px -3px #0000002c;display:flex;align-items:center;padding:0 10px 0 15px;font-size:19px;color:#b4bfce;justify-content:space-between}
.go{width:40px;height:40px;border-radius:10px;background:linear-gradient(90deg,#615fff,#155dfc);display:grid;place-items:center;margin-top:-1px}
.p{height:30px;width:158px;border-radius:15px;background:#f6f7fe;box-shadow:0 1px 3px #0002;margin-top:11.500px;display:flex;align-items:center;justify-content:center;font-size:14.800px;color:#6a7282;gap:4.500px;padding-bottom:1px}</style>
<div class="h"><div class="t"><div class="ic"><svg width="20" height="26" viewBox="0 0 20 26" fill="#615fff"><path d="M11.500 9.500Q12.700 16.300 19.500 17.800 12.700 19.300 11.500 26 10.300 19.300 3.500 17.800 10.300 16.300 11.500 9.500ZM5 2Q5.700 6 9.600 6.800 5.700 7.600 5 11.500 4.300 7.600.4 6.800 4.300 6 5 2ZM16 0Q16.500 2.800 19.200 3.300 16.500 3.800 16 6.600 15.500 3.800 12.800 3.300 15.500 2.800 16 0Z" stroke="#615fff" stroke-width=".7" stroke-linejoin="round"/></svg></div><fit-text class="g" w="106">AI Assistant</fit-text><span class="x">${close('#6a7282', 13, 1.700)}</span></div>
<div class="b"><fit-text class="g" w="79.500">AI Copilot</fit-text><fit-text w="53.500">Details</fit-text></div></div>
<div class="c"><div class="av"><fit-text w="16.500">AI</fit-text></div><div class="m"><fit-text w="302">Hello! I can help you draft responses to</fit-text><fit-text w="311">messages, find information, and suggest</fit-text><fit-text w="275.500">actions. How can I assist you today?</fit-text><fit-text class="j" w="57.500">Just now</fit-text></div></div>
<div class="f"><div class="gl"></div><div class="i"><fit-text w="142">Ask AI for help...</fit-text><div class="go"><svg width="14" height="22" viewBox="0 0 14 22" fill="none" stroke="#fff" stroke-width="1.300" stroke-linejoin="round"><path d="M3.300 1H9.600L8.300 8.400H13L5 20.500 6.300 12.700H1Z"/></svg></div></div>
<div class="p"><fit-text w="72">Press Enter</fit-text><svg width="9" height="10" viewBox="0 0 9 10"><path d="M7.300 1V5.500H3" fill="none" stroke="#6a7282" stroke-width="1.500"/><path d="M4.500 2 .5 5.500 4.500 9Z" fill="#6a7282"/></svg><fit-text w="49">to send</fit-text></div></div>`);

/* ---------- taskbar ---------- */
const T = [
`<rect x="0" y="9" width="22" height="20" rx="1.500" fill="#686a6b"/><rect x="8" y="1" width="22" height="20" rx="1.500" fill="#e6e6e6"/><path d="M8 9H22V21H8Z" fill="#b5b5b5"/>`,
`<defs><linearGradient id="c1" x2=".3" y2="1"><stop stop-color="#2a9df4"/><stop offset=".5" stop-color="#1fa8a0"/><stop offset="1" stop-color="#f4c21b"/></linearGradient><linearGradient id="c2" x2=".2" y2="1"><stop stop-color="#a66bf0"/><stop offset=".5" stop-color="#f0608f"/><stop offset="1" stop-color="#ffa15b"/></linearGradient></defs><path d="M9 3H18Q21 3 20 7L15 22Q14 26 10 26H5Q1 26 2 21L5 9Q6 3 9 3Z" fill="url(#c1)"/><path d="M21 6H25Q30 6 29 12L26 24Q24 30 19 30H14Q11 30 12 26L17 10Q18 6 21 6Z" fill="url(#c2)"/><path d="M15 3H20Q23 4 24 7H19Q17 7 16 10Z" fill="#1f4fd0"/>`,
`<path d="M8 9 20 1 31 9V28H8Z" fill="#1066b5"/><path d="M12 8H27V20H12Z" fill="#35c1f1"/><path d="M8 18 31 10V27Q31 30 28 30H8Z" fill="#28a8ea"/><path d="M18 22 31 12V27Q31 30 28 30Z" fill="#50d9ff"/><rect x="0" y="11" width="15" height="15" rx="2" fill="#0f6cbd"/><circle cx="7.500" cy="18.500" r="3.800" fill="none" stroke="#fff" stroke-width="2"/>`,
`<rect x="3" y="2" width="26" height="27" fill="#b6e33d"/><path d="M3 2H29V10Z" fill="#f6ef3d"/><path d="M3 29V12L14 29Z" fill="#21d789"/><rect x="6.500" y="5.500" width="19" height="20" fill="#050505"/><text x="8.500" y="15" font-family="Liberation Sans" font-weight="700" font-size="9.500" fill="#fff">PC</text><path d="M9 22H16" stroke="#fff" stroke-width="1.500"/>`,
`<defs><linearGradient id="e1" x2="1" y2=".3"><stop stop-color="#1b9de2"/><stop offset="1" stop-color="#5fe05a"/></linearGradient><linearGradient id="e2" x2="1" y2="1"><stop stop-color="#1a93dc"/><stop offset="1" stop-color="#0c4a93"/></linearGradient></defs><path d="M1 15A15 15 0 0 1 31 14Q31 21 24 21 18 21 19 18 21 14 16 11 8 7 1 15Z" fill="url(#e1)"/><path d="M1 15Q3 9 11 9 18 10 19 16 12 13 11 20 12 28 22 26 27 24 28 24A15 15 0 0 1 1 15Z" fill="url(#e2)"/>`,
`<path d="M1 4Q1 3 2 3H11L14 6V12H1Z" fill="#e0a010"/><rect x="1" y="6" width="30" height="23" rx="2" fill="#fdcb42"/><path d="M1 14H31V27Q31 29 29 29H3Q1 29 1 27Z" fill="#fbc02e"/><path d="M6 29V24Q6 22 8 22H24Q26 22 26 24V29Z" fill="#1173c4"/><path d="M11 25H21" stroke="#0b4f8d" stroke-width="1.500"/>`,
`<ellipse cx="16" cy="16" rx="14" ry="14.500" fill="#fafafa"/><path d="M16 4Q22 12 20 18 19 22 16.500 24V28H15.500V24Q12 21 11.500 17 11 11 16 4Z" fill="#0e7a45"/><path d="M16 4V28" stroke="#0a5f38"/>`,
`<path d="M9 1H23L26 4 29 5 28 10 29 13 25 25 16 31 7 25 3 13 4 10 3 5 6 4Z" fill="#fb3c16"/><path d="M10 6H22L26 11 23 15 25 18 19 21 20 24 16 27 12 24 13 21 7 18 9 15 6 11Z" fill="#fff"/><path d="M9.500 11 14 12 15 17 12.500 18 10 14ZM22.500 11 18 12 17 17 19.500 18 22 14ZM13 20 16 22 19 20 16 24Z" fill="#fb3c16"/>`,
`<circle cx="16" cy="16" r="14.700" fill="#ff6c37"/><path d="M8 25 13 18 20 12 21 14 14 20Z" fill="#fff"/><circle cx="22.500" cy="9.500" r="2.800" fill="#fff"/><path d="M13 18 17 11 20 11" stroke="#fff" stroke-width="1.200" fill="none"/>`,
chrome,
chrome,
`<path d="M23 1 31 4V28L23 31 9 18 3 23 1 21.500 7 16 1 10.500 3 9 9 14Z" fill="#0a7fd0"/><path d="M23 1 31 4V28L23 31Z" fill="#2fa9f2"/><path d="M23 9V23L13.500 16Z" fill="#142a30"/>`,
`<circle cx="16" cy="16" r="14.800" fill="#fc3b1c"/><path d="M8 11 12.500 22 17 11 21.500 22 24.500 11M12 10H26" fill="none" stroke="#fff" stroke-width="2.300" stroke-linejoin="round"/>`,
`<rect x="4" y="4" width="24" height="25" rx="6" fill="#030303"/><path d="M16 8 23 12V20L16 25 9 20V12Z" fill="#9a9a9a"/><path d="M9 12H23L16 25V16Z" fill="#e9e9e9"/><path d="M16 8 23 12 16 14 9 12Z" fill="#686868"/>`
];
define('win-taskbar', `<style>
:host{height:60px;background:#142a30;border-top:1px solid #35474c;display:flex;align-items:center;color:#fff}
.w{width:338px;padding-left:25px;display:flex;gap:7px;font-size:14.600px;line-height:20px;align-items:center;margin-top:-2px}
.wt{color:#f2f5f6;margin-top:-1px}.wt fit-text{display:block}.wt fit-text+fit-text{color:#c2cacd}
.s{width:275px;height:40px;border-radius:20px;border:1px solid #4a5b61;background:#35464c;margin-left:17px;display:flex;align-items:center;padding:0 7px 0 13px;font-size:16.500px;color:#d7dde0;gap:12px}
.s .fl{margin-left:auto}
.ap{display:flex;margin-left:2px}
.a{width:55px;height:59px;display:grid;place-items:center;position:relative}
.a.on:before{content:"";position:absolute;left:3px;top:4px;width:49px;height:50px;border-radius:5px;background:#22373d;border:1px solid #304449}
.a svg{position:relative}
.a i{position:absolute;left:18px;top:50px;width:20px;height:4px;border-radius:2px;background:#4cc2ff}
.a i.s2{left:24px;width:8px;background:#8b979b}
.a b{position:absolute;left:29px;top:8px;width:20px;height:20px;border-radius:50%;background:#0288d1;color:#b9e2f7;font:500 13px/20px Roboto;text-align:center}
.tr{margin-left:69px;display:flex;align-items:center;font-size:14.800px}
.tr>div{display:grid;place-items:center}
.n71{width:18px;height:18px;background:#ff7f3f;color:#fff;font:12.500px/18px "Open Sans";text-align:center}
.st{line-height:20px;font-size:14.600px;margin-top:-2px}.e{justify-items:end!important;margin-top:-3px}</style>
<div class="w"><svg width="32" height="34" viewBox="0 0 32 34"><path d="M3 23Q10 24 14 18 18 19 24 20 24 32 13 33 5 32 3 23Z" fill="#f0921d"/><path d="M4 18Q-1 17 1 13 2 10 5 10 7 6 11 7 16 8 15 18Z" fill="#a9c7f5"/><path d="M14 31Q10 29 13 25 15 24 17 24 19 19 24 21 26 22 26 24 31 25 30 29 29 31 27 31Z" fill="#b3cdf7"/><circle cx="23.500" cy="10" r="9.600" fill="#ff98a4"/><text x="23.500" y="15" font-family="Open Sans" font-size="14" text-anchor="middle" fill="#101010">8</text></svg><div class="wt"><fit-text w="31">30°C</fit-text><fit-text w="86">Partly cloudy</fit-text></div></div>
<svg width="29" height="29" viewBox="0 0 29 29"><defs><linearGradient id="w" x2="1" y2="1"><stop stop-color="#6fe6fd"/><stop offset="1" stop-color="#0c93fb"/></linearGradient></defs><path d="M0 0H14V14H0ZM15 0H29V14H15ZM0 15H14V29H0ZM15 15H29V29H15Z" fill="url(#w)"/></svg>
<div class="s"><svg width="20" height="20" viewBox="0 0 20 20" fill="none" stroke="#e2e7e9" stroke-width="2"><circle cx="8.300" cy="8.300" r="6.800"/><path d="M13.200 13.200 18.500 18.500"/></svg><fit-text w="52">Search</fit-text>
<svg class="fl" width="60" height="32" viewBox="0 0 60 32"><path d="M0 18Q8 24 18 30L46 31Q57 28 60 17L50 26 30 28 10 26Z" fill="#5d9447"/><path d="M5 25V10M5 17 1 12M5 17 10 13M52 22 54 3M53 10 48 6M53 10 58 6M53 15 58 12" stroke="#5f9a4c" stroke-width="2" fill="none"/><path d="M27 20 12 8 21 13 18 3 25 12 27 0 29 12 35 3 32 14 41 9Z" fill="#b7b4c4"/><path d="M34 28 31 15 36 20 38 9 40 21Z" fill="#8263c8"/><g fill="#f19a63"><circle cx="11" cy="23" r="5.500"/><circle cx="17" cy="28" r="4"/><circle cx="10" cy="29" r="3"/></g><g fill="#f283ad"><circle cx="41" cy="18" r="5"/><circle cx="49" cy="20" r="5.500"/><circle cx="45" cy="27" r="5.500"/><circle cx="53" cy="27" r="3.500"/></g><circle cx="45" cy="21" r="4" fill="#ffb6cb"/><circle cx="40" cy="12" r="2.500" fill="#f19a63"/><path d="M14 22 22 25 24 17 27 24 34 19 31 27 35 31H16L19 27Z" fill="#f5c73e"/></svg></div>
<div class="ap">${T.map((d, i) => `<div class="a${i === 9 ? ' on' : ''}"><svg width="30" height="30" viewBox="0 0 32 32">${d}</svg>${i === 9 ? '<i></i><b>S</b>' : i === 13 ? '<i class="s2"></i>' : ''}</div>`).join('')}</div>
<div class="tr"><div style="width:46px"><svg width="14" height="9" viewBox="0 0 14 9"><path d="M1 8 7 2 13 8" fill="none" stroke="#fff" stroke-width="2"/></svg></div>
<div style="width:34px"><span class="n71">71</span></div>
<div style="width:46px"><svg width="22" height="22" viewBox="0 0 22 22" fill="none" stroke="#fff" stroke-width="1.300"><path d="M1.500 10A9.200 9.200 0 0 1 19 5.500M19.500 1.500V6.300H14.700M10 20.500Q5 20 2.500 15.500M7.500 15.300H2V20.500"/><circle cx="15.500" cy="16.500" r="5.300" fill="#ff9d0a" stroke="none"/></svg></div>
<div class="st" style="width:50px"><fit-text w="28.500">ENG</fit-text><fit-text w="14">IN</fit-text></div>
<div style="width:28px;margin-left:8px"><svg width="21" height="17" viewBox="0 0 21 17" fill="none" stroke="#fff" stroke-width="1.500"><path d="M1 6.500A13.500 13.500 0 0 1 20 6.500M4 9.700A9.300 9.300 0 0 1 17 9.700M6.800 12.600A5.300 5.300 0 0 1 14.200 12.600"/><circle cx="10.500" cy="14.800" r="1.800" fill="#fff" stroke="none"/></svg></div>
<div style="width:30px"><svg width="20" height="16" viewBox="0 0 20 16" fill="none" stroke="#fff" stroke-width="1.400"><path d="M1 5.500H4L9 1V15L4 10.500H1ZM12 4.500 19 11.500M19 4.500 12 11.500"/></svg></div>
<div style="width:32px"><svg width="22" height="18" viewBox="0 0 22 18" fill="none" stroke="#fff" stroke-width="1.500"><rect x="2" y="5" width="16" height="11.500" rx="2.500"/><path d="M20 8.500V13" stroke-width="2.500"/><path d="M6 7.500H15.500V14H4.500V9Z" fill="#fff" stroke="none"/><path d="M5 0 .8 6H3.500L3 10 7.500 4.300H4.800Z" fill="#fff" stroke="#142a30" stroke-width=".8"/></svg></div>
<div class="st e" style="width:91px"><fit-text w="35">20:27</fit-text><fit-text w="77">24-05-2025</fit-text></div>
<div style="width:24px;margin-left:9px"><svg width="20" height="21" viewBox="0 0 20 21"><path d="M2 15V8Q2 1.500 8.500 1.500H10V8H15V15L17 17H0ZM6 18H11Q8.500 22 6 18Z" fill="#fff"/><path d="M6 7.500H10.500L6 13.500H10.500" fill="none" stroke="#142a30" stroke-width="1.500"/><path d="M12 1H17.500L12.500 7H18" fill="none" stroke="#fff" stroke-width="1.500"/></svg></div></div>`);

define('desktop-screen', `<style>:host{width:1920px;height:1080px;overflow:hidden;display:flex;flex-direction:column}.app{height:911px;display:flex;background:#fff;overflow:hidden}browser-chrome,win-taskbar{flex:none}</style>
<browser-chrome></browser-chrome><div class="app"><message-sidebar></message-sidebar><chat-panel></chat-panel><ai-panel></ai-panel></div><win-taskbar></win-taskbar>`);

/* Single-line label that spreads or tightens its letters to the width in its "w" attribute. */
customElements.define('fit-text', class extends HTMLElement {
  connectedCallback() {
    if (this.shadowRoot) return;
    this.attachShadow({ mode: 'open' }).innerHTML = '<style>:host{display:block;white-space:nowrap;flex:none}span{display:inline-block}</style><span><slot></slot></span>';
    const w = +this.getAttribute('w'), s = this.shadowRoot.querySelector('span');
    const n = this.textContent.length, nat = s.getBoundingClientRect().width;
    s.style.letterSpacing = ((w - nat) / (n - 1)).toFixed(3) + 'px';
    this.style.width = w + 'px';
  }
});
</script>
</body>
</html>
